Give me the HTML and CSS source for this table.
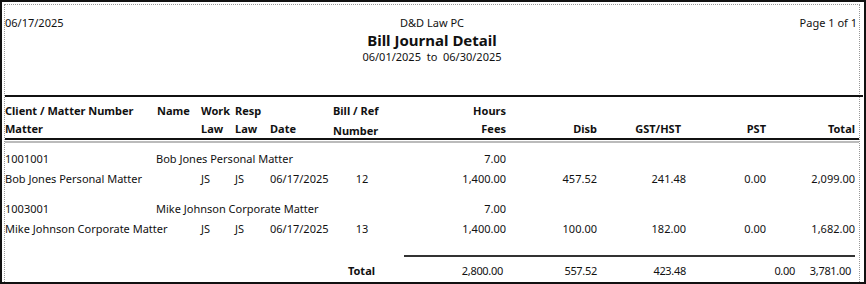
FILE: index.html
```html
<!DOCTYPE html>
<html lang="en">
<head>
<meta charset="utf-8">
<title>Bill Journal Detail</title>
<link rel="stylesheet" href="styles.css">
</head>
<body>
<div class="frame">
  <div class="sheet">
    <header class="top">
      <div class="date">06/17/2025</div>
      <div class="center">
        <div class="firm">D&amp;D Law PC</div>
        <div class="title">Bill Journal Detail</div>
        <div class="range">06/01/2025&nbsp; to &nbsp;06/30/2025</div>
      </div>
      <div class="pageno">Page 1 of 1</div>
    </header>
    <div class="rule-top"></div>

    <div class="grid head">
      <div class="c1">Client / Matter Number</div>
      <div class="c2">Name</div>
      <div class="c3">Work</div>
      <div class="c4">Resp</div>
      <div class="c5"></div>
      <div class="c6">Bill / Ref</div>
      <div class="c7 num">Hours</div>
      <div class="c8"></div><div class="c9"></div><div class="c10"></div><div class="c11"></div>

      <div class="c1">Matter</div>
      <div class="c2"></div>
      <div class="c3">Law</div>
      <div class="c4">Law</div>
      <div class="c5">Date</div>
      <div class="c6 low">Number</div>
      <div class="c7 num">Fees</div>
      <div class="c8 num">Disb</div>
      <div class="c9 num gst">GST/HST</div>
      <div class="c10 num">PST</div>
      <div class="c11 num">Total</div>
    </div>
    <div class="rule-head"></div>

    <div class="grid group">
      <div class="c1">1001001</div>
      <div class="span-name">Bob Jones Personal Matter</div>
      <div class="c7 num">7.00</div>
      <div class="c8"></div><div class="c9"></div><div class="c10"></div><div class="c11"></div>

      <div class="c1">Bob Jones Personal Matter</div>
      <div class="c2"></div>
      <div class="c3">JS</div>
      <div class="c4">JS</div>
      <div class="c5">06/17/2025</div>
      <div class="c6 mid">12</div>
      <div class="c7 num">1,400.00</div>
      <div class="c8 num">457.52</div>
      <div class="c9 num">241.48</div>
      <div class="c10 num">0.00</div>
      <div class="c11 num">2,099.00</div>
    </div>

    <div class="grid group">
      <div class="c1">1003001</div>
      <div class="span-name">Mike Johnson Corporate Matter</div>
      <div class="c7 num">7.00</div>
      <div class="c8"></div><div class="c9"></div><div class="c10"></div><div class="c11"></div>

      <div class="c1">Mike Johnson Corporate Matter</div>
      <div class="c2"></div>
      <div class="c3">JS</div>
      <div class="c4">JS</div>
      <div class="c5">06/17/2025</div>
      <div class="c6 mid">13</div>
      <div class="c7 num">1,400.00</div>
      <div class="c8 num">100.00</div>
      <div class="c9 num">182.00</div>
      <div class="c10 num">0.00</div>
      <div class="c11 num">1,682.00</div>
    </div>

    <div class="total-rule"></div>
    <div class="grid totals">
      <div class="total-label">Total</div>
      <div class="c7 num t-hours">2,800.00</div>
      <div class="c8 num">557.52</div>
      <div class="c9 num">423.48</div>
      <div class="c10 num t-pst">0.00</div>
      <div class="c11 num t-total">3,781.00</div>
    </div>
  </div>
</div>
</body>
</html>
```

FILE: styles.css
```css
html, body {
  margin: 0;
  padding: 0;
  background: #fff;
}

body {
  font-family: "Noto Sans", "Open Sans", sans-serif;
  font-size: 11px;
  color: #111;
  white-space: nowrap;
}

.frame {
  width: 866px;
  height: 284px;
  box-sizing: border-box;
  border: 2px solid #111;
  padding: 2px 4px 0 2px;
  overflow: hidden;
}

.sheet {
  height: 300px;
  border-top: 1px dotted #999;
  border-left: 1px dotted #999;
  border-right: 1px dotted #999;
  box-sizing: border-box;
}

.top {
  display: grid;
  grid-template-columns: 1fr auto 1fr;
  padding-top: 10px;
  height: 90px;
  box-sizing: border-box;
}

.date {
  line-height: 16px;
}

.center {
  text-align: center;
}

.firm {
  line-height: 16px;
}

.title {
  font-weight: 700;
  font-size: 15px;
  line-height: 19px;
}

.range {
  line-height: 14px;
}

.pageno {
  text-align: right;
  padding-right: 2px;
  line-height: 16px;
}

.rule-top {
  height: 2px;
  background: #111;
  margin-right: -4px;
}

.grid {
  display: grid;
  grid-template-columns: 152px 44px 34px 35px 63px 58px 115px 91px 89px 80px 89px;
}

.head {
  font-weight: 700;
  padding-top: 5px;
  line-height: 18px;
}

.head .low {
  padding-top: 3px;
  line-height: 15px;
}

.gst {
  padding-right: 5px;
}

.num {
  text-align: right;
}

.mid {
  text-align: center;
}

.rule-head {
  height: 2px;
  background: #111;
  border-bottom: 1px solid #fff;
  box-shadow: 0 2px 0 #bbb;
  margin-bottom: 1px;
}

.group {
  line-height: 20px;
  padding-top: 7px;
}

.group + .group {
  padding-top: 10px;
}

.span-name {
  grid-column: 2 / 7;
  margin-left: -1px;
}

.total-rule {
  height: 2px;
  background: #333;
  margin: 16px 0 0 399px;
  width: 451px;
}

.totals {
  line-height: 20px;
  padding-top: 4px;
  letter-spacing: -0.3px;
}

.total-label {
  grid-column: 1 / 7;
  text-align: right;
  font-weight: 700;
  padding-right: 16px;
  letter-spacing: 0;
}

.t-hours {
  padding-right: 3px;
}

.t-pst {
  margin-right: -29px;
}

.t-total {
  padding-right: 4px;
}
```
